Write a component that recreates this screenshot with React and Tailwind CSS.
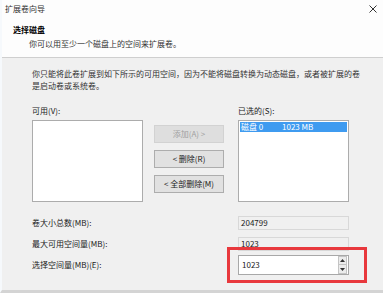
import React from "react";

const font = { fontFamily: '"Noto Sans CJK SC", "Noto Sans", sans-serif' };

export default function App() {
  return (
    <div
      className="relative w-[383px] h-[293px] overflow-hidden bg-[#f0f0f0] border-l-2 border-[#f6f9fc] border-b-[3px] border-b-[#d4d4d4] text-[8px] text-[#1a1a1a]"
      style={font}
    >
      {/* Header */}
      <div className="h-[58px] bg-[#fdfdfd] border-b border-[#cfcfcf]">
        <div className="h-[17px] flex items-center justify-between pl-[3px] pr-[6px] text-[#333]">
          <span className="leading-[12px]">扩展卷向导</span>
          <svg width="8" height="8" viewBox="0 0 8 8">
            <path d="M0.5 0.5 L7.5 7.5 M7.5 0.5 L0.5 7.5" stroke="#333" strokeWidth="1" />
          </svg>
        </div>
        <div className="pl-[11px] mt-[7px] leading-[12px] font-bold text-black">选择磁盘</div>
        <div className="pl-[27px] mt-[2px] leading-[12px] text-[#333]">你可以用至少一个磁盘上的空间来扩展卷。</div>
      </div>

      {/* Body */}
      <div className="pl-[30px] pt-[10px]">
        <div className="leading-[12px] whitespace-nowrap text-[#333]">
          你只能将此卷扩展到如下所示的可用空间，因为不能将磁盘转换为动态磁盘，或者被扩展的卷
        </div>
        <div className="leading-[12px] text-[#333]">是启动卷或系统卷。</div>

        <div className="flex mt-[13px]">
          <div className="w-[111px] flex flex-col">
            <div className="leading-[12px] h-[12px]">可用(V):</div>
            <div className="mt-[3px] h-[82px] bg-white border border-[#acacac]"></div>
          </div>
          <div className="ml-[11px] w-[70px] pt-[20px] flex flex-col gap-[7px]">
            <div className="h-[18px] flex items-center justify-center bg-[#dedede] border border-[#d2d2d2] text-[#a0a0a0]">
              添加(A) &gt;
            </div>
            <div className="h-[18px] flex items-center justify-center bg-[#e1e1e1] border border-[#adadad]">
              &lt; 删除(R)
            </div>
            <div className="h-[18px] flex items-center justify-center bg-[#e1e1e1] border border-[#adadad]">
              &lt; 全部删除(M)
            </div>
          </div>
          <div className="ml-[14px] w-[111px] flex flex-col">
            <div className="leading-[12px] h-[12px]">已选的(S):</div>
            <div className="mt-[3px] h-[82px] bg-white border border-[#acacac] p-px">
              <div className="h-[10px] bg-[#3f9bf0] text-white flex items-center leading-[10px]">
                <span className="pl-px w-[42px]">磁盘 0</span>
                <span>1023 MB</span>
              </div>
            </div>
          </div>
        </div>

        <div className="flex items-center mt-[14px]">
          <div className="w-[206px] leading-[12px]">卷大小总数(MB):</div>
          <div className="w-[111px] h-[14px] border border-[#d8d8d8] flex items-center pl-[2px] text-[#222]">204799</div>
        </div>
        <div className="flex items-center mt-[7px]">
          <div className="w-[206px] leading-[12px]">最大可用空间量(MB):</div>
          <div className="w-[111px] h-[14px] border border-[#d8d8d8] flex items-center pl-[2px] text-[#222]">1023</div>
        </div>
        <div className="flex items-center mt-[4px]">
          <div className="w-[206px] leading-[12px]">选择空间量(MB)(E):</div>
          <div className="w-[111px] h-[20px] bg-white border border-[#a8a8a8] flex items-center justify-between">
            <span className="pl-[3px] text-[#222]">1023</span>
            <div className="flex flex-col h-[18px] w-[9px] mr-px">
              <div className="h-[9px] bg-[#ececec] border border-[#c4c4c4] flex items-center justify-center">
                <svg width="5" height="3" viewBox="0 0 5 3"><path d="M2.5 0 L5 3 L0 3 Z" fill="#333" /></svg>
              </div>
              <div className="h-[9px] bg-[#ececec] border border-[#c4c4c4] border-t-0 flex items-center justify-center">
                <svg width="5" height="3" viewBox="0 0 5 3"><path d="M0 0 L5 0 L2.5 3 Z" fill="#333" /></svg>
              </div>
            </div>
          </div>
        </div>
      </div>

      {/* Red highlight */}
      <div className="absolute left-[225px] top-[247px] w-[140px] h-[36px] border-[3px] border-[#e8383d]"></div>
    </div>
  );
}
